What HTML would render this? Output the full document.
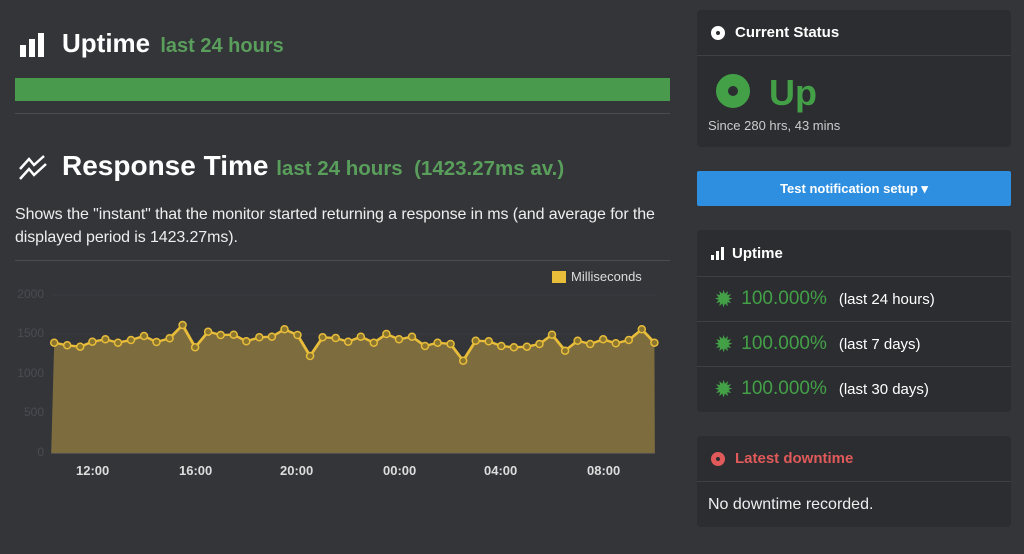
<!DOCTYPE html>
<html><head><style>
body{margin:0;width:1024px;height:554px;background:#333539;font-family:"Liberation Sans",sans-serif;position:relative;overflow:hidden;color:#fff}
.a{position:absolute}
.g{color:#5a9e5c}
.panel{position:absolute;left:697px;width:314px;background:#2b2d31;border-radius:4px}
.hd{border-bottom:1px solid #3e4045;height:45px;display:flex;align-items:center;padding-left:14px;font-weight:bold;font-size:15px}
.row{border-top:1px solid #3e4045;height:44px;display:flex;align-items:center;padding-left:17px;font-size:15px}
.row b{color:#43a047;font-size:19px;font-weight:normal;margin:0 12px 0 8px}
.st{color:#43a047;font-size:23px;line-height:20px}
.yl{position:absolute;left:8px;font-size:12px;color:#4a4c51;width:36px;text-align:right}
</style></head><body>
<div class="a" style="left:20px;top:33px;width:28px;height:24px">
<div class="a" style="left:0;top:12px;width:6px;height:12px;background:#fff"></div>
<div class="a" style="left:9px;top:6px;width:6px;height:18px;background:#fff"></div>
<div class="a" style="left:18px;top:0;width:6px;height:24px;background:#fff"></div></div>
<div class="a" style="left:62px;top:28px;font-size:26px;font-weight:bold">Uptime <span class="g" style="font-size:20px;margin-left:3px">last 24 hours</span></div>
<div class="a" style="left:15px;top:78px;width:655px;height:23px;background:#4a9a4d"></div>
<div class="a" style="left:15px;top:113px;width:655px;height:1px;background:#4a4c51"></div>
<svg class="a" style="left:18px;top:155px" width="32" height="26" viewBox="0 0 32 26"><path d="M2 14 L11 4 L16 10 L26 1 M2 24 L11 14 L16 20 L28 9" stroke="#fff" stroke-width="2.5" fill="none"/></svg>
<div class="a" style="left:62px;top:150px;font-size:28px;font-weight:bold">Response Time <span class="g" style="font-size:20.5px">last 24 hours &nbsp;(1423.27ms av.)</span></div>
<div class="a" style="left:15px;top:203px;width:670px;font-size:16px;line-height:23px;color:#eee;letter-spacing:-0.1px">Shows the "instant" that the monitor started returning a response in ms (and average for the displayed period is 1423.27ms).</div>
<div class="a" style="left:15px;top:260px;width:655px;height:1px;background:#4a4c51"></div>
<div class="a" style="left:552px;top:271px;width:14px;height:12px;background:#e8bd3a"></div>
<div class="a" style="left:571px;top:269px;font-size:13px;color:#ddd">Milliseconds</div>
<div class="yl" style="top:287px">2000</div>
<div class="yl" style="top:326px">1500</div>
<div class="yl" style="top:366px">1000</div>
<div class="yl" style="top:405px">500</div>
<div class="yl" style="top:445px">0</div>
<svg class="a" style="left:0;top:260px" width="680" height="294" viewBox="0 0 1568 882" preserveAspectRatio="none">
<path d="M118 105H1510M118 222H1510M118 340H1510M118 458H1510" stroke="#3d3f44" stroke-width="2"/>
<polygon fill="#7d6c3e" points="118,580 125,248 155,256 185,260 213,245 243,238 272,248 302,240 332,228 361,246 391,235 421,195 450,262 480,215 509,225 539,224 568,244 598,232 627,230 656,208 686,225 715,288 744,232 774,234 803,245 832,230 862,248 891,222 920,238 950,230 980,258 1009,248 1039,252 1068,302 1097,242 1127,244 1156,258 1185,262 1215,260 1244,252 1273,224 1303,272 1332,242 1361,252 1391,238 1420,250 1450,240 1480,208 1509,248 1510,580"/>
<polyline fill="none" stroke="#e8bd3a" stroke-width="7" points="125,248 155,256 185,260 213,245 243,238 272,248 302,240 332,228 361,246 391,235 421,195 450,262 480,215 509,225 539,224 568,244 598,232 627,230 656,208 686,225 715,288 744,232 774,234 803,245 832,230 862,248 891,222 920,238 950,230 980,258 1009,248 1039,252 1068,302 1097,242 1127,244 1156,258 1185,262 1215,260 1244,252 1273,224 1303,272 1332,242 1361,252 1391,238 1420,250 1450,240 1480,208 1509,248"/>
<path d="M118 580H1510" stroke="#555" stroke-width="3"/>
</svg>
<svg class="a" style="left:0;top:260px" width="680" height="294" viewBox="0 0 680 294">
<g fill="#8a7530" stroke="#e8bd3a" stroke-width="1.5">
<circle cx="54.2" cy="82.7" r="3.5"/><circle cx="67.2" cy="85.3" r="3.5"/><circle cx="80.2" cy="86.7" r="3.5"/><circle cx="92.4" cy="81.7" r="3.5"/><circle cx="105.4" cy="79.3" r="3.5"/><circle cx="118" cy="82.7" r="3.5"/><circle cx="131" cy="80" r="3.5"/><circle cx="144" cy="76" r="3.5"/><circle cx="156.5" cy="82" r="3.5"/><circle cx="169.6" cy="78.3" r="3.5"/><circle cx="182.6" cy="65" r="3.5"/><circle cx="195.1" cy="87.3" r="3.5"/><circle cx="208.1" cy="71.7" r="3.5"/><circle cx="220.7" cy="75" r="3.5"/><circle cx="233.7" cy="74.7" r="3.5"/><circle cx="246.3" cy="81.3" r="3.5"/><circle cx="259.3" cy="77.3" r="3.5"/><circle cx="271.9" cy="76.7" r="3.5"/><circle cx="284.5" cy="69.3" r="3.5"/><circle cx="297.5" cy="75" r="3.5"/><circle cx="310.1" cy="96" r="3.5"/><circle cx="322.6" cy="77.3" r="3.5"/><circle cx="335.7" cy="78" r="3.5"/><circle cx="348.2" cy="81.7" r="3.5"/><circle cx="360.8" cy="76.7" r="3.5"/><circle cx="373.8" cy="82.7" r="3.5"/><circle cx="386.4" cy="74" r="3.5"/><circle cx="399" cy="79.3" r="3.5"/><circle cx="412" cy="76.7" r="3.5"/><circle cx="425" cy="86" r="3.5"/><circle cx="437.6" cy="82.7" r="3.5"/><circle cx="450.6" cy="84" r="3.5"/><circle cx="463.2" cy="100.7" r="3.5"/><circle cx="475.7" cy="80.7" r="3.5"/><circle cx="488.7" cy="81.3" r="3.5"/><circle cx="501.3" cy="86" r="3.5"/><circle cx="513.9" cy="87.3" r="3.5"/><circle cx="526.9" cy="86.7" r="3.5"/><circle cx="539.5" cy="84" r="3.5"/><circle cx="552" cy="74.7" r="3.5"/><circle cx="565.1" cy="90.7" r="3.5"/><circle cx="577.6" cy="80.7" r="3.5"/><circle cx="590.2" cy="84" r="3.5"/><circle cx="603.2" cy="79.3" r="3.5"/><circle cx="615.8" cy="83.3" r="3.5"/><circle cx="628.8" cy="80" r="3.5"/><circle cx="641.8" cy="69.3" r="3.5"/><circle cx="654.4" cy="82.7" r="3.5"/>
</g></svg>
<div class="a" style="top:463px;left:0;width:680px;font-size:13px;font-weight:bold;color:#ddd">
<span class="a" style="left:76px">12:00</span><span class="a" style="left:179px">16:00</span><span class="a" style="left:280px">20:00</span><span class="a" style="left:383px">00:00</span><span class="a" style="left:484px">04:00</span><span class="a" style="left:587px">08:00</span></div>

<div class="panel" style="top:10px;height:137px">
<div class="hd"><span style="display:inline-block;border:5px solid #fff;border-radius:50%;width:4px;height:4px;background:#2b2d31;margin-right:10px"></span>Current Status</div>
<div class="a" style="left:19px;top:64px;border:12px solid #43a047;border-radius:50%;width:10px;height:10px;background:#2b2d31"></div>
<div class="a" style="left:72px;top:62px;font-size:36px;font-weight:bold;color:#43a047">Up</div>
<div class="a" style="left:11px;top:108px;font-size:13px;color:#ccc">Since 280 hrs, 43 mins</div>
</div>
<div class="a" style="left:697px;top:171px;width:314px;height:35px;background:#2e8fe0;border-radius:2px;text-align:center;line-height:35px;font-size:13px;font-weight:bold">Test notification setup &#9662;</div>
<div class="panel" style="top:230px;height:182px">
<div class="hd" style="height:46px;border:none"><span style="display:inline-block;width:3px;height:5px;background:#fff;margin-right:2px;align-self:center;margin-top:8px"></span><span style="display:inline-block;width:3px;height:9px;background:#fff;margin-right:2px;margin-top:4px"></span><span style="display:inline-block;width:3px;height:13px;background:#fff;margin-right:8px"></span>Uptime</div>
<div class="row"><span class="st">&#10041;</span><b>100.000%</b>(last 24 hours)</div>
<div class="row"><span class="st">&#10041;</span><b>100.000%</b>(last 7 days)</div>
<div class="row"><span class="st">&#10041;</span><b>100.000%</b>(last 30 days)</div>
</div>
<div class="panel" style="top:436px;height:91px">
<div class="hd" style="color:#e05a5a"><span style="display:inline-block;border:5px solid #e05a5a;border-radius:50%;width:4px;height:4px;margin-right:10px"></span>Latest downtime</div>
<div class="a" style="left:11px;top:60px;font-size:16px;color:#eee">No downtime recorded.</div>
</div>
</body></html>
